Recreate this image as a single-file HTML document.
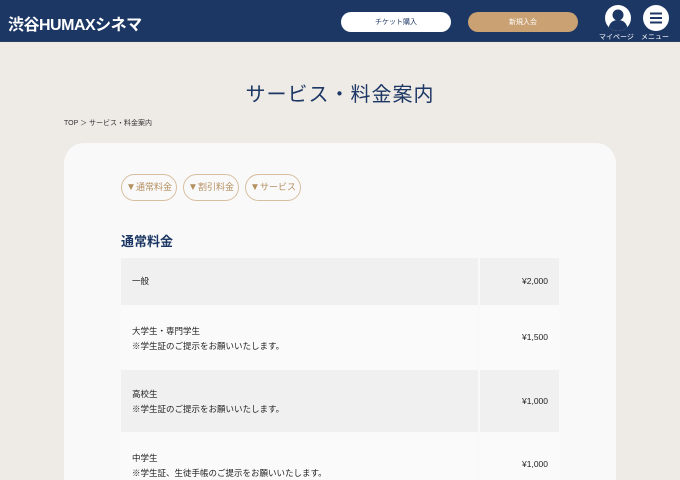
<!DOCTYPE html>
<html><head><meta charset="utf-8"><style>
*{margin:0;padding:0;box-sizing:border-box}
html,body{width:680px;height:480px;overflow:hidden}
body{background:#eeeae6;font-family:"Liberation Sans","Noto Sans CJK JP",sans-serif;position:relative}
.hd{position:absolute;left:0;top:0;width:680px;height:42px;background:#1c3764;border-bottom:1px solid #2a3f66}
.logo{position:absolute;left:8px;top:11px;color:#fff;font-size:16px;font-weight:bold;letter-spacing:-0.5px}
.btn{position:absolute;top:12px;height:20px;width:110px;border-radius:10px;font-size:7px;text-align:center;line-height:21px}
.ic{position:absolute;top:5px;width:26px;height:26px;border-radius:50%;background:#fff;overflow:hidden}
.lb{position:absolute;top:32px;color:#fff;font-size:7px}
h1{position:absolute;top:78px;left:0;width:680px;text-align:center;font-size:20px;font-weight:normal;color:#1c3764;letter-spacing:1px}
.bc{position:absolute;left:64px;top:118px;font-size:7px;color:#333}
.card{position:absolute;left:64px;top:143px;width:552px;height:337px;background:#f9f9f9;border-radius:20px 20px 0 0}
.tab{position:absolute;top:174px;height:27px;border:1px solid #d8bf9f;border-radius:14px;color:#b48f5f;font-size:9px;line-height:25px;text-align:center}
.tab b{font-size:10px;color:#b48f5f}
h2{position:absolute;left:121px;top:231px;font-size:13px;color:#1c3764}
.row{position:absolute;left:121px;width:438px;font-size:8.5px;color:#222}
.row .l{position:absolute;left:0;top:0;width:357px;height:100%;padding-left:11px}
.row .r{position:absolute;left:359px;top:0;width:79px;height:100%;text-align:right;padding-right:11px}
.g .l,.g .r{background:#f0f0f0}
.w .l,.w .r{background:#fafafa}
</style></head><body>
<div class="hd">
<div class="logo">渋谷HUMAXシネマ</div>
<div class="btn" style="left:341px;background:#fff;color:#1c3764">チケット購入</div>
<div class="btn" style="left:468px;background:#c9a173;color:#fff">新規入会</div>
<div class="ic" style="left:605px"><svg width="26" height="26" viewBox="0 0 26 26"><circle cx="13" cy="10" r="5.5" fill="#1c3764"/><path d="M3 26 Q4 15 13 15 Q22 15 23 26Z" fill="#1c3764"/></svg></div>
<div class="ic" style="left:643px"><svg width="26" height="26" viewBox="0 0 26 26"><path d="M7 8.5H19M7 13H19M7 17.5H19" stroke="#1c3764" stroke-width="2"/></svg></div>
<div class="lb" style="left:599px">マイページ</div>
<div class="lb" style="left:641px">メニュー</div>
</div>
<h1>サービス・料金案内</h1>
<div class="bc">TOP ＞ サービス・料金案内</div>
<div class="card"></div>
<div class="tab" style="left:121px;width:56px"><b>▼</b>通常料金</div>
<div class="tab" style="left:183px;width:56px"><b>▼</b>割引料金</div>
<div class="tab" style="left:245px;width:56px"><b>▼</b>サービス</div>
<h2>通常料金</h2>
<div class="row g" style="top:258px;height:47px"><div class="l" style="line-height:47px">一般</div><div class="r" style="line-height:47px">¥2,000</div></div>
<div class="row w" style="top:306px;height:63px"><div class="l" style="padding-top:18px;line-height:15px">大学生・専門学生<br>※学生証のご提示をお願いいたします。</div><div class="r" style="line-height:63px">¥1,500</div></div>
<div class="row g" style="top:370px;height:62px"><div class="l" style="padding-top:17px;line-height:15px">高校生<br>※学生証のご提示をお願いいたします。</div><div class="r" style="line-height:62px">¥1,000</div></div>
<div class="row w" style="top:433px;height:47px"><div class="l" style="padding-top:18px;line-height:15px">中学生<br>※学生証、生徒手帳のご提示をお願いいたします。</div><div class="r" style="padding-top:26px">¥1,000</div></div>
</body></html>
